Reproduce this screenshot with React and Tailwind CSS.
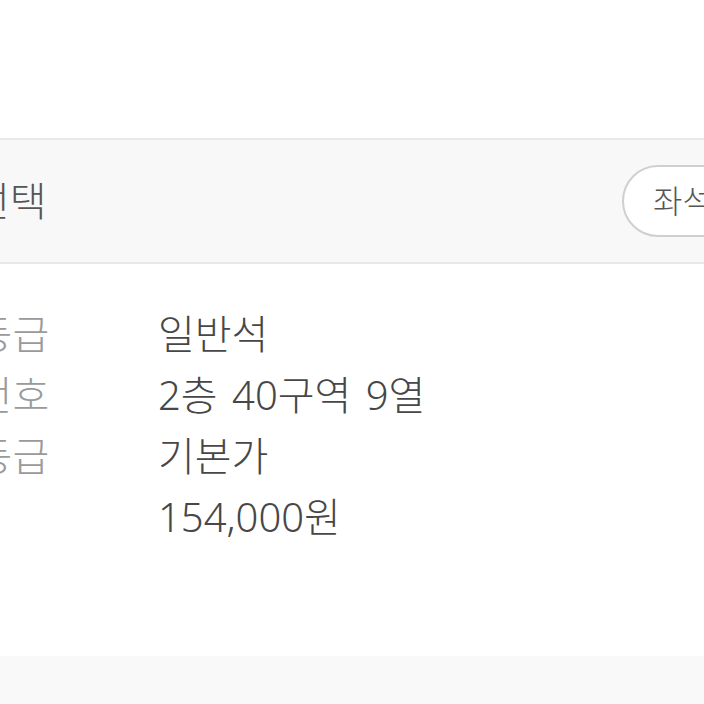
import React from 'react';

const rows = [
  { label: '좌석등급', value: '일반석' },
  { label: '좌석번호', value: '2층 40구역 9열' },
  { label: '가격등급', value: '기본가' },
  { label: '', value: '154,000원' },
];

const font = { fontFamily: '"Noto Sans", "Noto Sans CJK KR", sans-serif' };

export default function App() {
  return (
    <div className="w-[704px] h-[704px] overflow-hidden bg-white flex flex-col" style={font}>
      <div className="h-[138px] shrink-0 bg-white"></div>

      {/* Section header */}
      <div className="h-[126px] shrink-0 bg-[#f8f8f8] border-y-2 border-[#e9e9e9] flex items-center ml-[-111px] w-[1000px]">
        <h2 className="w-[733px] shrink-0 text-[40px] font-light text-[#555] leading-none">좌석 선택</h2>
        <button className="h-[72px] px-[29px] rounded-full border-2 border-[#cfcfcf] bg-white text-[32px] font-light text-[#555] leading-none whitespace-nowrap">
          좌석 변경
        </button>
      </div>

      {/* Seat info */}
      <div className="ml-[-98px] pt-[45px] flex flex-col gap-[12px]">
        {rows.map((r, i) => (
          <div key={i} className="flex items-center h-[49px]">
            <span className="w-[256px] shrink-0 text-[40px] font-light text-[#9a9a9a] leading-none whitespace-nowrap">{r.label}</span>
            <span className="text-[40px] font-light text-[#474747] leading-none whitespace-nowrap [word-spacing:4px]">{r.value}</span>
          </div>
        ))}
      </div>

      <div className="flex-1"></div>
      <div className="h-[48px] shrink-0 bg-[#f9f9f9]"></div>
    </div>
  );
}
